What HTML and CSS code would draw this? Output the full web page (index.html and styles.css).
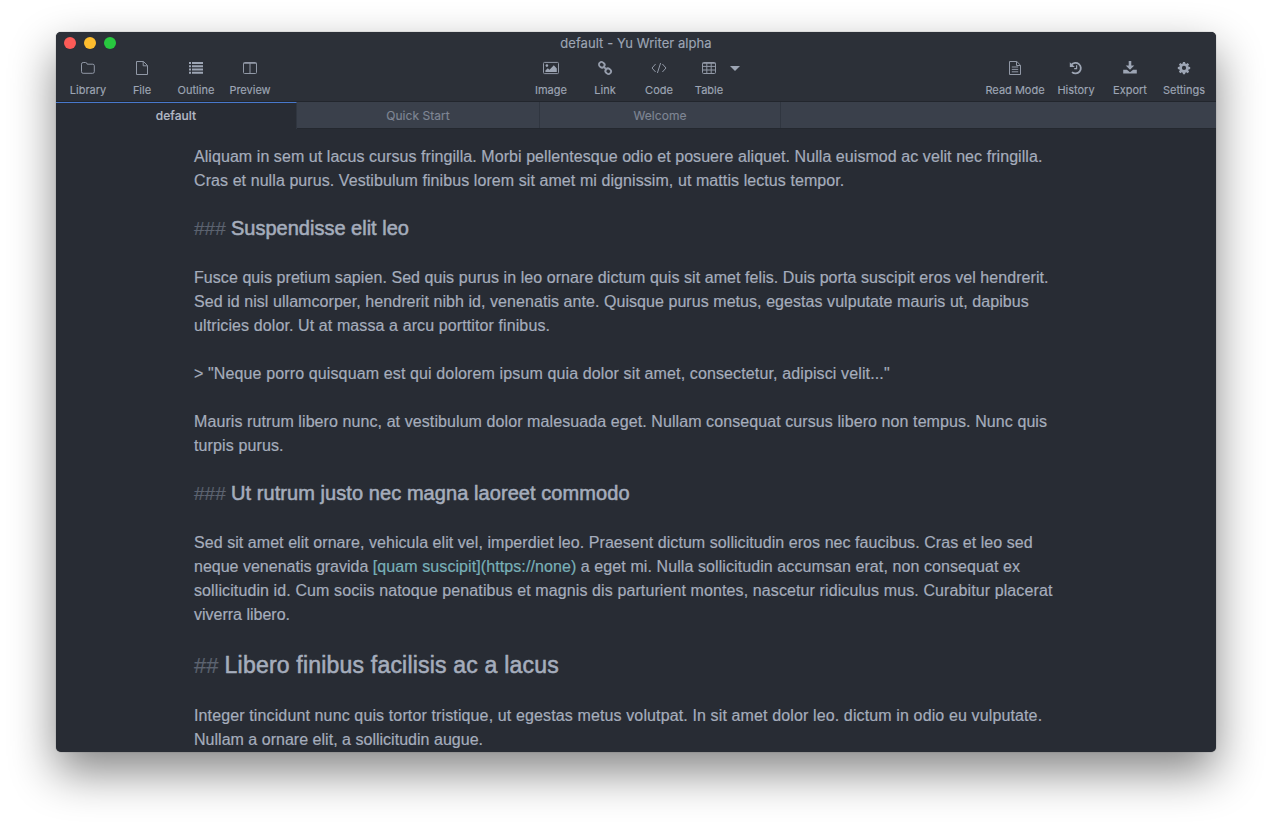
FILE: index.html
```html
<!DOCTYPE html>
<html lang="en">
<head>
<meta charset="utf-8">
<title>default - Yu Writer alpha</title>
<link rel="stylesheet" href="styles.css">
</head>
<body>
<div class="window">
  <header class="chrome">
    <div class="titlebar">
      <div class="lights"><i class="light red"></i><i class="light yellow"></i><i class="light green"></i></div>
      <span class="title">default - Yu Writer alpha</span>
    </div>
    <nav class="toolbar">
      <div class="group left">
        <div class="tool"><svg viewBox="0 0 16 16" class="line"><path d="M1.5 4.2q0-1.7 1.7-1.7h2.3q1.5 0 1.7 1.7h5.6q1.5 0 1.5 1.5v6q0 1.6-1.6 1.6H3.1q-1.6 0-1.6-1.6z"/></svg><span>Library</span></div>
        <div class="tool"><svg viewBox="0 0 16 16" class="line"><path d="M2.5 1.5h7l4 4v9h-11zM9.2 1.7v4.1h4.1"/></svg><span>File</span></div>
        <div class="tool"><svg viewBox="0 0 16 16" class="solid"><path d="M1 2.1h2v2H1zM4 2.1h11v2H4zM1 5.3h2v2H1zM4 5.3h11v2H4zM1 8.5h2v2H1zM4 8.5h11v2H4zM1 11.7h2v2H1zM4 11.7h11v2H4z"/></svg><span>Outline</span></div>
        <div class="tool"><svg viewBox="0 0 16 16" class="line"><rect x="1.5" y="2.5" width="13" height="11" rx="1"/><path d="M8 3v10.5M1.5 3.3h13"/></svg><span>Preview</span></div>
      </div>
      <div class="group center">
        <div class="tool"><svg viewBox="0 0 16 16" class="line"><rect x=".5" y="2.4" width="15" height="11.2" rx="1"/><circle class="dot" cx="3.9" cy="5.6" r="1.3"/><path class="dot" d="M2.4 12v-1.6l2.4-2.1 1.7 1.4 4.3-4.4 3 3.3V12z"/></svg><span>Image</span></div>
        <div class="tool"><svg viewBox="0 0 16 16" class="chain"><rect x="1.9" y="2.3" width="5.8" height="5" rx="2.4" transform="rotate(42 4.8 4.8)"/><rect x="8.3" y="8.7" width="5.8" height="5" rx="2.4" transform="rotate(42 11.2 11.2)"/><path d="M6 6.1l4 3.9"/></svg><span>Link</span></div>
        <div class="tool"><svg viewBox="0 0 16 16" class="line"><path d="M4.6 4L1 8l3.6 4M11.4 4L15 8l-3.6 4M9.6 3L6.4 13"/></svg><span>Code</span></div>
        <div class="tool table"><svg viewBox="0 0 16 16" class="line"><rect x="1.5" y="2.5" width="13" height="11" rx="1"/><path d="M1.5 3.3h13M1.5 6.4h13M1.5 10h13M5.8 3v10.5M10.2 3v10.5"/></svg><span>Table</span></div>
        <i class="caret"></i>
      </div>
      <div class="group right">
        <div class="tool read"><svg viewBox="0 0 16 16" class="line"><path d="M2.5 1.5h7.3l3.7 3.7v9.3h-11zM9.5 1.7v3.8h3.8M4.8 7h6.4M4.8 9.4h6.4M4.8 11.8h6.4"/></svg><span>Read Mode</span></div>
        <div class="tool"><svg viewBox="0 0 16 16" class="thick"><path d="M3.4 4.8A5.3 5.3 0 1 1 4 12.1"/><path class="dot" d="M1.8 2.2v4.9h5z"/><path class="thin" d="M8.6 5.2v3.4H6.2"/></svg><span>History</span></div>
        <div class="tool"><svg viewBox="0 0 16 16" class="solid"><path d="M6.7 1h2.6v4.6h3L8 9.8 3.7 5.6h3zM1.2 9.8h3.7L8 12.3l3.1-2.5h3.7v3.6H1.2z"/></svg><span>Export</span></div>
        <div class="tool"><svg viewBox="-.8 -.4 17.6 17.6" class="solid"><path fill-rule="evenodd" d="M6.9 1.7h2.2l.4 1.8 1 .4 1.5-1 1.6 1.6-1 1.5.4 1 1.8.4v2.2l-1.8.4-.4 1 1 1.5-1.6 1.6-1.5-1-1 .4-.4 1.8H6.9l-.4-1.8-1-.4-1.5 1-1.6-1.6 1-1.5-.4-1-1.8-.4V7.4L3 7l.4-1-1-1.5L4 2.9l1.5 1 1-.4zM8 6a2.3 2.3 0 1 0 0 4.6A2.3 2.3 0 0 0 8 6z"/></svg><span>Settings</span></div>
      </div>
    </nav>
  </header>
  <div class="tabs">
    <div class="tab active">default</div>
    <div class="tab">Quick Start</div>
    <div class="tab last">Welcome</div>
  </div>
  <main class="editor">
    <p><span class="l1">Aliquam in sem ut lacus cursus fringilla. Morbi pellentesque odio et posuere aliquet. Nulla euismod ac velit nec fringilla.</span><br><span class="l2">Cras et nulla purus. Vestibulum finibus lorem sit amet mi dignissim, ut mattis lectus tempor.</span></p>
    <h3><span class="mark">###</span> <span class="h1t">Suspendisse elit leo</span></h3>
    <p><span class="l3">Fusce quis pretium sapien. Sed quis purus in leo ornare dictum quis sit amet felis. Duis porta suscipit eros vel hendrerit.</span><br><span class="l4">Sed id nisl ullamcorper, hendrerit nibh id, venenatis ante. Quisque purus metus, egestas vulputate mauris ut, dapibus</span><br><span class="l5">ultricies dolor. Ut at massa a arcu porttitor finibus.</span></p>
    <p><span class="l6">&gt; "Neque porro quisquam est qui dolorem ipsum quia dolor sit amet, consectetur, adipisci velit..."</span></p>
    <p><span class="l7">Mauris rutrum libero nunc, at vestibulum dolor malesuada eget. Nullam consequat cursus libero non tempus. Nunc quis</span><br><span class="l8">turpis purus.</span></p>
    <h3><span class="mark">###</span> <span class="h2t">Ut rutrum justo nec magna laoreet commodo</span></h3>
    <p><span class="l9">Sed sit amet elit ornare, vehicula elit vel, imperdiet leo. Praesent dictum sollicitudin eros nec faucibus. Cras et leo sed</span><br>neque venenatis gravida <span class="l10"><span class="link">[quam suscipit](https://none)</span> a eget mi. Nulla sollicitudin accumsan erat, non consequat ex</span><br><span class="l11">sollicitudin id. Cum sociis natoque penatibus et magnis dis parturient montes, nascetur ridiculus mus. Curabitur placerat</span><br><span class="l12">viverra libero.</span></p>
    <h2><span class="mark">##</span> <span class="h3t">Libero finibus facilisis ac a lacus</span></h2>
    <p><span class="l13">Integer tincidunt nunc quis tortor tristique, ut egestas metus volutpat. In sit amet dolor leo. dictum in odio eu vulputate.</span><br><span class="l14">Nullam a ornare elit, a sollicitudin augue.</span></p>
  </main>
</div>
</body>
</html>
```
FILE: styles.css
```css
* { box-sizing: border-box; }
body { margin: 0; height: 832px; padding: 32px 56px; background: #fff; overflow: hidden; font-family: Inter, "Liberation Sans", sans-serif; color: #9da5b4; }
.window { width: 1160px; height: 720px; border-radius: 5px; background: #282c34; overflow: hidden; display: flex; flex-direction: column; box-shadow: 0 0 1px rgba(0,0,0,.6), 0 20px 46px rgba(0,0,0,.48); }
.chrome { height: 70px; background: #2c3038; border-bottom: 1px solid #22262d; flex: none; }
.titlebar { height: 22px; display: grid; grid-template-columns: 1fr auto 1fr; align-items: center; }
.lights { display: flex; gap: 8px; padding-left: 8px; }
.light { width: 12px; height: 12px; border-radius: 50%; }
.red { background: #fc5b57; }
.yellow { background: #febd2e; }
.green { background: #28c83f; }
.title { font-size: 13px; line-height: 22px; letter-spacing: .06px; -webkit-text-stroke: .15px; }
.toolbar { height: 47px; display: grid; grid-template-columns: 452px 1fr auto; padding: 1px 5px 0; }
.group { display: flex; }
.center { padding-left: 11px; }
.tool { width: 54px; display: flex; flex-direction: column; align-items: center; padding-top: 5px; font-size: 11px; line-height: 16px; white-space: nowrap; -webkit-text-stroke: .15px; }
.tool svg { width: 16px; height: 16px; margin-bottom: 6px; overflow: visible; }
.tool.table { width: 46px; }
.tool.read { width: 68px; }
.caret { width: 0; height: 0; margin: 11px 0 0 -2px; border: 5px solid transparent; border-top-color: #9da5b4; border-bottom: 0; }
.line { fill: none; stroke: #9198a6; stroke-width: 1; }
.thick { fill: none; stroke: #9da5b4; stroke-width: 1.8; }
.chain { fill: none; stroke: #959cab; stroke-width: 1.8; }
.thin { stroke-width: 1.2; }
.solid, .dot { fill: #9da5b4; stroke: none; }
.tabs { display: flex; flex: none; height: 27px; background: #3a404b; border-bottom: 1px solid #24282f; }
.tab { width: 243px; border-right: 1px solid #303640; text-align: center; font-size: 12px; line-height: 28px; color: #7f8694; letter-spacing: .05px; -webkit-text-stroke: .15px; }
.tab.last { width: 241px; }
.tab.active { width: 241px; height: 27px; background: #282c34; border-top: 1px solid #4878cc; color: #b4bac6; font-weight: 500; line-height: 26px; }
.editor { padding: 16px 0 0 138px; font-family: "Liberation Sans", Arial, sans-serif; font-size: 16px; line-height: 24px; white-space: nowrap; color: #a5adbc; -webkit-text-stroke: .2px; }
.editor p { margin: 0 0 24px; }
h2, h3 { margin: 0; font-weight: 400; -webkit-text-stroke: .55px #a5adbc; }
h3 { font-size: 19px; line-height: 23px; height: 49px; }
h2 { font-size: 22px; line-height: 28px; height: 53px; }
.mark { color: #5c6370; -webkit-text-stroke: .2px #5c6370; }
.link { color: #78b0b8; }
.h1t { font-size: 20px; }
.h2t { font-size: 20px; letter-spacing: .07px; }
.h3t { font-size: 23px; letter-spacing: .2px; }
.l1, .l3 { letter-spacing: .065px; }
.l2 { letter-spacing: .08px; }
.l4, .l9 { letter-spacing: .058px; }
.l5, .l11 { letter-spacing: .105px; }
.l6, .l13 { letter-spacing: .127px; }
.l7, .l10 { letter-spacing: .087px; }
.l8 { letter-spacing: .12px; }
.l14 { letter-spacing: .02px; }
```
